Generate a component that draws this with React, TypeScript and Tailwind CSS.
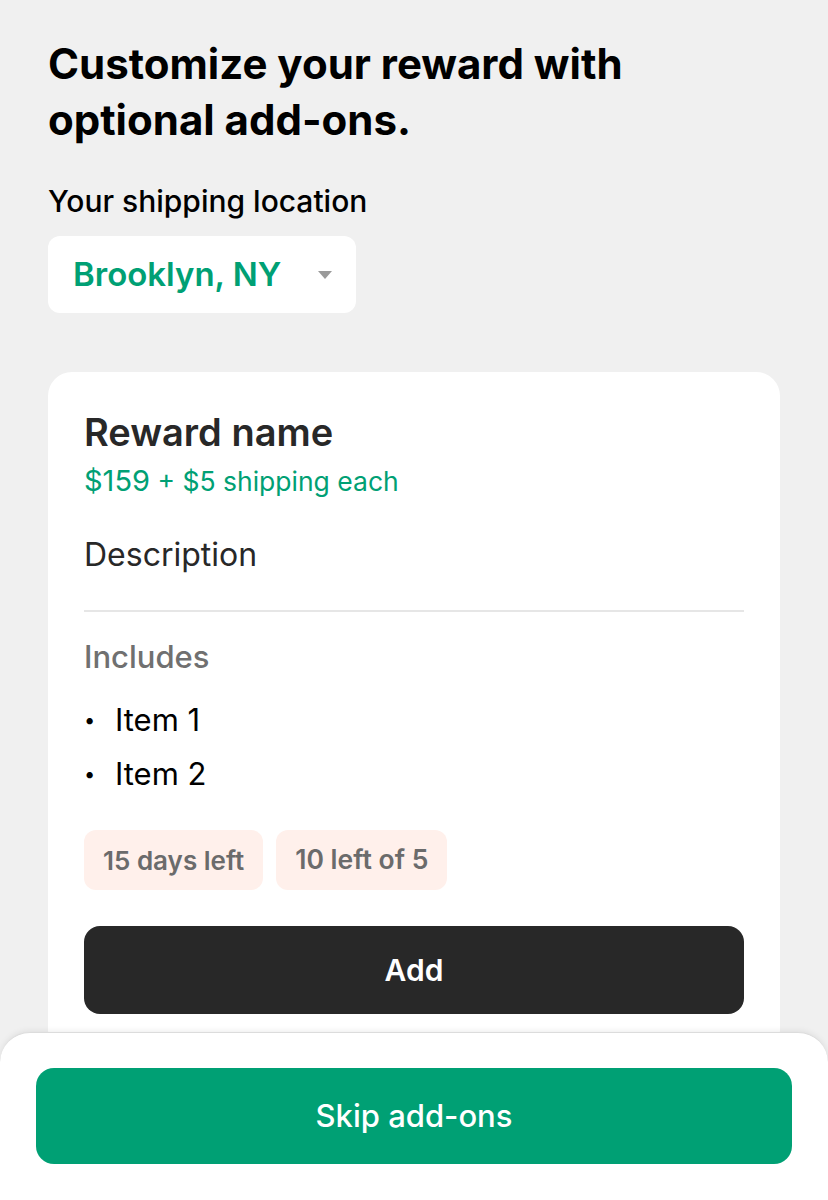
import React from "react";

export default function App() {
  return (
    <div
      className="relative w-[828px] h-[1200px] overflow-hidden bg-[#f0f0f0]"
      style={{ fontFamily: "Inter, 'Liberation Sans', sans-serif" }}
    >
      <div className="px-12 pt-[36px]">
        <h1 className="text-[42px] leading-[56px] font-bold text-black">
          Customize your reward with
          <br />
          optional add-ons.
        </h1>
        <div className="mt-[36px] text-[30px] leading-[34px] font-medium text-black">
          Your shipping location
        </div>
        <div className="mt-[18px] w-[308px] h-[77px] bg-white rounded-[12px] flex items-center pl-[25px] pr-[24px] justify-between">
          <span className="text-[33px] font-semibold text-[#00a074]">Brooklyn, NY</span>
          <svg width="14" height="8" viewBox="0 0 14 8">
            <path d="M0 0 L14 0 L7 8 Z" fill="#9a9a9a" />
          </svg>
        </div>

        <div className="mt-[59px] w-[732px] bg-white rounded-[24px] px-9 pt-[38px] pb-[40px]">
          <div className="text-[38px] leading-[44px] font-semibold text-[#282828]">Reward name</div>
          <div className="mt-[10px] text-[#00a074] leading-[34px]">
            <span className="text-[29px]">$159</span>
            <span className="text-[26.5px]"> + $5 shipping each</span>
          </div>
          <div className="mt-[35px] text-[32px] leading-[36px] text-[#282828]">Description</div>
          <div className="mt-[37px] h-[2px] bg-[#e6e6e6]" />
          <div className="mt-[27px] text-[31px] leading-[36px] font-medium text-[#707070]">Includes</div>
          <ul className="mt-[27px] flex flex-col gap-[18px]">
            <li className="flex items-center text-[31px] leading-[36px] text-black">
              <span className="w-[31px] text-[20px]">•</span>Item 1
            </li>
            <li className="flex items-center text-[31px] leading-[36px] text-black">
              <span className="w-[31px] text-[20px]">•</span>Item 2
            </li>
          </ul>
          <div className="mt-[38px] flex gap-[13px]">
            <div className="h-[60px] px-[19px] rounded-[12px] bg-[#fff0eb] flex items-center text-[26px] font-semibold text-[#6b6b6b]">
              15 days left
            </div>
            <div className="h-[60px] px-[19px] rounded-[12px] bg-[#fff0eb] flex items-center text-[26.5px] font-semibold text-[#6b6b6b]">
              10 left of 5
            </div>
          </div>
          <button className="mt-[36px] w-full h-[88px] rounded-[16px] bg-[#282828] text-white text-[30px] font-semibold">
            Add
          </button>
        </div>
      </div>

      <div className="absolute left-0 right-0 bottom-0 h-[168px] bg-white rounded-t-[30px] border-t border-[#dcdcdc] shadow-[0_-1px_6px_rgba(0,0,0,0.08)] px-9 pt-[35px]">
        <button className="w-full h-[96px] rounded-[18px] bg-[#00a074] text-white text-[31px] font-medium">
          Skip add-ons
        </button>
      </div>
    </div>
  );
}
